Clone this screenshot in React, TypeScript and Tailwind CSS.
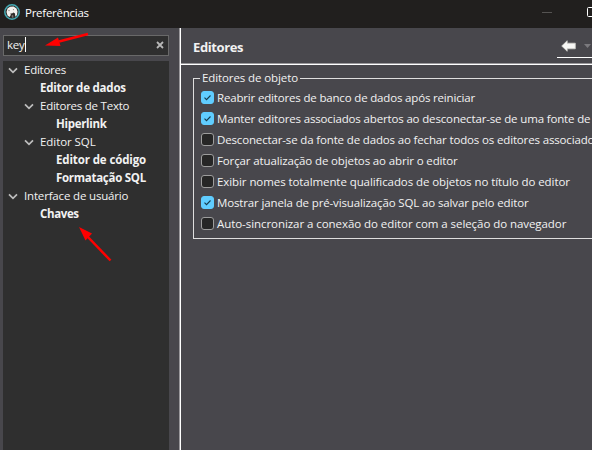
import React from 'react';

type Node = { label: string; pad: string; branch?: boolean; track: string };

const nodes: Node[] = [
  { label: 'Editores', pad: 'pl-[5px]', branch: true, track: 'tracking-[-0.26px]' },
  { label: 'Editor de dados', pad: 'pl-[37px]', track: 'tracking-[-0.21px]' },
  { label: 'Editores de Texto', pad: 'pl-[21px]', branch: true, track: 'tracking-[-0.24px]' },
  { label: 'Hiperlink', pad: 'pl-[53px]', track: 'tracking-[-0.3px]' },
  { label: 'Editor SQL', pad: 'pl-[21px]', branch: true, track: 'tracking-[-0.06px]' },
  { label: 'Editor de código', pad: 'pl-[53px]', track: 'tracking-[-0.12px]' },
  { label: 'Formatação SQL', pad: 'pl-[53px]', track: 'tracking-[-0.28px]' },
  { label: 'Interface de usuário', pad: 'pl-[5px]', branch: true, track: 'tracking-[-0.17px]' },
  { label: 'Chaves', pad: 'pl-[37px]', track: 'tracking-[-0.36px]' },
];

const options = [
  { label: 'Reabrir editores de banco de dados após reiniciar', on: true, track: 'tracking-[-0.17px]' },
  { label: 'Manter editores associados abertos ao desconectar-se de uma fonte de', on: true, track: 'tracking-[-0.15px]' },
  { label: 'Desconectar-se da fonte de dados ao fechar todos os editores associado', on: false, track: 'tracking-[-0.15px]' },
  { label: 'Forçar atualização de objetos ao abrir o editor', on: false, track: 'tracking-[-0.13px]' },
  { label: 'Exibir nomes totalmente qualificados de objetos no título do editor', on: false, track: 'tracking-[-0.08px]' },
  { label: 'Mostrar janela de pré-visualização SQL ao salvar pelo editor', on: true, track: 'tracking-[-0.135px]' },
  { label: 'Auto-sincronizar a conexão do editor com a seleção do navegador', on: false, track: 'tracking-[-0.06px]' },
];

function Logo() {
  return (
    <svg className="h-4 w-4 shrink-0" viewBox="0 0 16 16">
      <circle cx="8" cy="8" r="7.2" fill="#302b29" stroke="#44a9b3" strokeWidth="1.5" />
      <path d="M2.500 8 3.500 4.500 6 2.700 9.500 2.600 12.500 4.500 13.500 7.500 13 11 11.300 12.700 11 9.500 9.500 8.500 8 9.500 6.500 9.200 6.800 11 5.500 13 3.500 11.500Z" fill="#f3f1ee" />
      <path d="M7.600 11.500 9 10.800 9.600 13.500 8 13.800Z" fill="#7b7470" />
      <circle cx="5" cy="6.500" r=".7" fill="#8b8581" />
      <circle cx="9.500" cy="5.600" r=".6" fill="#8b8581" />
    </svg>
  );
}

export default function App() {
  return (
    <div className="relative flex h-[450px] w-[592px] flex-col overflow-hidden whitespace-nowrap bg-[#48474c] font-['Open_Sans','Noto_Sans',sans-serif] text-[11.5px] leading-[18px] text-[#f2f2f2]">
      <header className="flex h-7 shrink-0 items-center bg-[#211f1e] pl-1">
        <div className="-mt-1"><Logo /></div>
        <span className="ml-[5px] pb-[2px] tracking-[-0.26px] text-white">Preferências</span>
        <svg className="ml-auto h-7 w-[52px]" viewBox="0 0 52 28" fill="none">
          <path d="M2 12.5h10" stroke="#555352" />
          <rect x="47.5" y="7.5" width="9" height="9" rx="1" stroke="#fff" />
        </svg>
      </header>

      <div className="flex min-h-0 flex-1">
        <aside className="flex w-[179px] shrink-0 flex-col pl-[3px] pr-[10px] pt-[7px]">
          <div className="flex h-[21px] shrink-0 items-center border border-[#696969] bg-[#2f2f2f] pl-[3px] pr-1">
            <span className="pb-[2px] tracking-[-0.2px]">key</span>
            <span className="mb-[3px] h-[15px] w-px bg-white" />
            <svg className="mb-px ml-auto h-2 w-2" viewBox="0 0 8 8">
              <path d="M1 1l6 6M7 1L1 7" stroke="#b8b8b8" strokeWidth="1.8" />
            </svg>
          </div>
          <div className="mt-[5px] flex-1 bg-[#2f2f2f]">
            {nodes.map((n) => (
              <div key={n.label} className={`flex h-[18px] items-center ${n.pad}`}>
                {n.branch && (
                  <svg className="mr-[6px] mt-px h-[7px] w-[10px]" viewBox="0 0 10 7" fill="none">
                    <path d="M1 1.3 5 5.3 9 1.3" stroke="#bdbdbd" strokeWidth="1.7" />
                  </svg>
                )}
                <span className={`${n.branch ? '' : 'font-bold'} ${n.track}`}>{n.label}</span>
              </div>
            ))}
          </div>
        </aside>

        <main className="flex min-w-0 flex-1 flex-col border-l border-[#99989b]">
          <div className="flex flex-1 flex-col border-l border-white">
            <div className="flex h-[37px] shrink-0 items-stretch border-b border-white">
              <div className="flex min-w-0 flex-1 border-b border-[#99989b]">
                <h1 className="ml-3 mt-[10px] text-[13px] font-bold leading-[18px] tracking-[-0.38px]">Editores</h1>
                <div className="ml-auto mt-2 flex h-[22px] w-[35px] border-b border-white">
                  <svg className="ml-1 mt-1 h-3 w-[15px] shrink-0" viewBox="0 0 15 12">
                    <path d="M.7 6 6.2.7V3.2H14.3V8.800H6.200V11.300Z" fill="#f7f7f5" stroke="#cfcfca" strokeWidth=".8" />
                  </svg>
                  <svg className="ml-2 mt-2 h-1 w-[7px] shrink-0" viewBox="0 0 7 4">
                    <path d="M0 0h7L3.5 4Z" fill="#7b7a7e" />
                  </svg>
                </div>
              </div>
            </div>
            <fieldset className="ml-3 mt-[4px] h-[170px] w-[420px] border border-[#dedede] pl-[7px]">
              <legend className="-ml-px px-[2px] leading-[18px] tracking-[-0.1px]">Editores de objeto</legend>
              <div>
                {options.map((o) => (
                  <label key={o.label} className="flex h-[21px] items-center">
                    <span className={`mr-[3px] h-[13px] w-[13px] shrink-0 rounded-[3px] border ${o.on ? 'border-[#60cdff] bg-[#60cdff]' : 'border-[#9d9d9d] bg-[#262626]'}`}>
                      {o.on && (
                        <svg className="h-[11px] w-[11px]" viewBox="0 0 11 11" fill="none">
                          <path d="M2.5 5.7 4.5 7.7 8.5 3.5" stroke="#153b4c" strokeWidth="1.1" />
                        </svg>
                      )}
                    </span>
                    <span className={o.track}>{o.label}</span>
                  </label>
                ))}
              </div>
            </fieldset>
          </div>
        </main>
      </div>

      <svg className="pointer-events-none absolute inset-0 h-full w-full" viewBox="0 0 592 450">
        <path d="M88 34 59 41.500" stroke="#ff0000" strokeWidth="2.5" />
        <path d="M45 45.500 58 37.500 60.500 46Z" fill="#ff0000" />
        <path d="M110.500 260.500 87 236" stroke="#ff0000" strokeWidth="2.500" />
        <path d="M79 227 92 233.500 85.500 240.500Z" fill="#ff0000" />
      </svg>
    </div>
  );
}
